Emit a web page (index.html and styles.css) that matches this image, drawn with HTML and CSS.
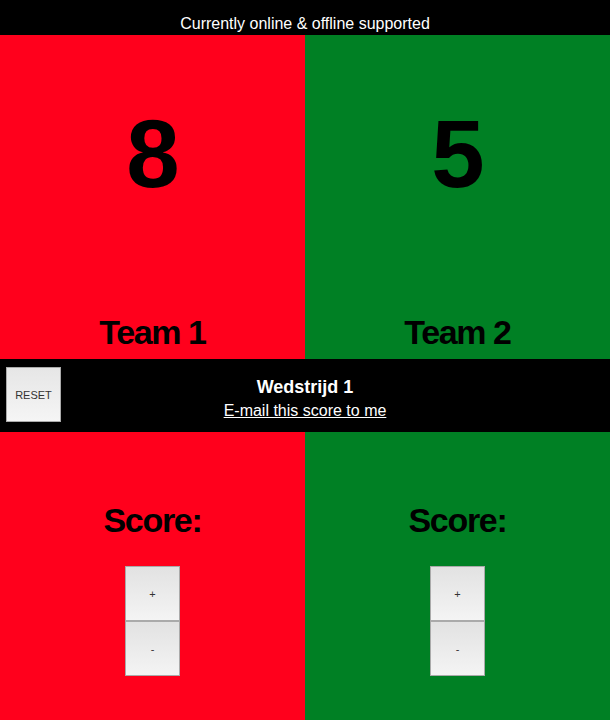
FILE: index.html
```html
<!DOCTYPE html>
<html>
<head>
<meta charset="utf-8">
<link rel="stylesheet" href="styles.css">
</head>
<body>
<div class="status">Currently online &amp; offline supported</div>
<div class="row top">
  <div class="panel red">
    <div class="number">8</div>
    <div class="team">Team 1</div>
  </div>
  <div class="panel green">
    <div class="number">5</div>
    <div class="team">Team 2</div>
  </div>
</div>
<div class="middle">
  <button class="reset">RESET</button>
  <div class="match">
    <div class="title">Wedstrijd 1</div>
    <a class="mail" href="#">E-mail this score to me</a>
  </div>
  <div></div>
</div>
<div class="row bottom">
  <div class="panel red">
    <div class="score">Score:</div>
    <div class="controls">
      <button class="btn">+</button>
      <button class="btn">-</button>
    </div>
  </div>
  <div class="panel green">
    <div class="score">Score:</div>
    <div class="controls">
      <button class="btn">+</button>
      <button class="btn">-</button>
    </div>
  </div>
</div>
</body>
</html>
```
FILE: styles.css
```css
html, body {
  margin: 0;
  padding: 0;
  background: #000;
  font-family: "Liberation Sans", Arial, sans-serif;
}
.status {
  height: 35px;
  box-sizing: border-box;
  padding-top: 15px;
  font-size: 16px;
  line-height: 18px;
  color: #fff;
  text-align: center;
}
.row {
  display: grid;
  grid-template-columns: 305px 305px;
}
.red { background: #ff001c; }
.green { background: #008024; }
.top .panel {
  height: 324px;
  box-sizing: border-box;
  padding: 71px 0 10px;
  display: flex;
  flex-direction: column;
  align-items: center;
  justify-content: space-between;
}
.number {
  font-size: 96px;
  line-height: 96px;
  font-weight: bold;
  letter-spacing: -1px;
  color: #000;
}
.team {
  font-size: 34px;
  line-height: 34px;
  font-weight: bold;
  letter-spacing: -1.4px;
  color: #000;
}
.middle {
  height: 73px;
  box-sizing: border-box;
  padding: 8px 6px;
  display: grid;
  grid-template-columns: 1fr auto 1fr;
  align-items: start;
}
.reset {
  width: 55px;
  height: 55px;
  margin: 0;
  padding: 0;
  border: 1px solid #aaa;
  background: linear-gradient(#e6e6e6, #f5f5f5);
  font-family: "Liberation Sans", Arial, sans-serif;
  font-size: 11px;
  color: #333;
}
.match {
  text-align: center;
  color: #fff;
  padding-top: 9px;
}
.title {
  font-size: 18px;
  line-height: 22px;
  font-weight: bold;
}
.mail {
  display: inline-block;
  margin-top: 3px;
  font-size: 16px;
  line-height: 20px;
  color: #fff;
  text-decoration: underline;
}
.bottom .panel {
  height: 288px;
  box-sizing: border-box;
  padding-top: 71px;
  display: flex;
  flex-direction: column;
  align-items: center;
}
.score {
  font-size: 34px;
  line-height: 34px;
  font-weight: bold;
  letter-spacing: -1.3px;
  color: #000;
}
.controls {
  margin-top: 29px;
  display: flex;
  flex-direction: column;
}
.btn {
  width: 55px;
  height: 55px;
  margin: 0;
  padding: 0;
  border: 1px solid #aaa;
  background: linear-gradient(#e2e2e2, #f4f4f4);
  font-family: "Liberation Sans", Arial, sans-serif;
  font-size: 11px;
  color: #333;
}
```
